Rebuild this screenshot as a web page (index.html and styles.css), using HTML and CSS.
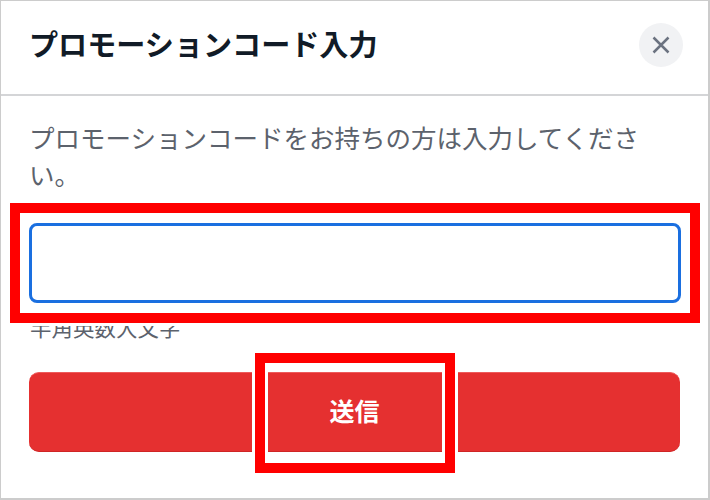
FILE: index.html
```html
<!DOCTYPE html>
<html lang="ja">
<head>
    <meta charset="UTF-8">
    <meta name="viewport" content="width=device-width, initial-scale=1.0">
    <title>プロモーションコード入力</title>
    <link rel="stylesheet" href="styles.css">
</head>
<body>
    <div class="modal">
        <div class="modal-header">
            <h1 class="modal-title">プロモーションコード入力</h1>
            <button class="close-button" aria-label="閉じる">
                <svg width="18" height="18" viewBox="0 0 18 18">
                    <path d="M1.5 1.5L16.5 16.5M16.5 1.5L1.5 16.5" fill="none" stroke="#6b7280" stroke-width="2.5"/>
                </svg>
            </button>
        </div>
        <div class="modal-body">
            <p class="description">プロモーションコードをお持ちの方は入力してください。</p>
            <div class="input-wrap">
                <input class="code-input" type="text">
                <div class="callout callout-input"></div>
            </div>
            <p class="hint">半角英数大文字</p>
            <div class="submit-wrap">
                <button class="submit-button">送信</button>
                <div class="callout callout-submit"></div>
            </div>
        </div>
    </div>
</body>
</html>
```

FILE: styles.css
```css
* {
    box-sizing: border-box;
    font-family: "Noto Sans CJK JP", "Noto Sans", sans-serif;
}

body {
    margin: 0;
    background-color: #fff;
}

.modal {
    width: 710px;
    height: 500px;
    border: 1px solid #ccc;
    border-right-width: 2px;
    border-bottom-width: 2px;
    overflow: hidden;
}

.modal-header {
    height: 95px;
    padding: 0 25px 6px 28px;
    display: flex;
    align-items: center;
    justify-content: space-between;
    border-bottom: 2px solid #d4d5d7;
}

.modal-title {
    margin: 0 0 3px;
    font-size: 29.1px;
    font-weight: bold;
    color: #111b27;
}

.close-button {
    width: 44px;
    height: 44px;
    padding: 0;
    display: flex;
    align-items: center;
    justify-content: center;
    border: none;
    border-radius: 50%;
    background-color: #f1f2f4;
}

.modal-body {
    padding: 22px 27px 0 28px;
}

.description {
    margin: 0;
    font-size: 25.5px;
    line-height: 37px;
    color: #5c626c;
}

.input-wrap {
    position: relative;
    margin-top: 31px;
}

.code-input {
    display: block;
    width: 100%;
    height: 80px;
    border: 3px solid #1a6fe0;
    border-radius: 8px;
    outline: none;
    background-color: #fff;
}

.hint {
    margin: 9px 0 0 1px;
    font-size: 21.5px;
    line-height: 30px;
    color: #5c626c;
}

.submit-wrap {
    position: relative;
    margin-top: 30px;
}

.submit-button {
    display: block;
    width: calc(100% - 1px);
    height: 80px;
    padding: 0 0 4px;
    border: none;
    border-top: 1px solid #ee5a5a;
    border-bottom: 1px solid #cf2525;
    border-radius: 10px;
    background-color: #e53030;
    color: #fff;
    font-size: 25px;
    font-weight: bold;
}

/* red annotation boxes drawn over the screenshot */
.callout {
    position: absolute;
    border: 10px solid #f00;
    box-shadow: 0 0 0 3px #fff, inset 0 0 0 3px #fff;
}

.callout-input {
    top: -20px;
    bottom: -20px;
    left: -19px;
    right: -19px;
}

.callout-submit {
    top: -19px;
    bottom: -21px;
    left: calc(50% - 100px);
    width: 200px;
}
```
